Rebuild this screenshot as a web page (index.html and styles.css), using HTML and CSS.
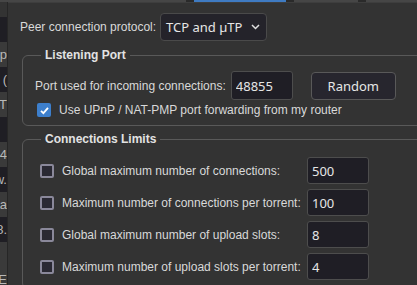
FILE: index.html
```html
<!DOCTYPE html>
<html>
<head>
<meta charset="utf-8">
<link rel="stylesheet" href="styles.css">
</head>
<body>
<div class="tabbar">
  <div class="seg s-a"></div>
  <div class="seg s-dark"></div>
  <div class="seg s-blue"></div>
  <div class="seg s-dark"></div>
  <div class="seg s-b"></div>
  <div class="seg s-dark"></div>
  <div class="seg s-c"></div>
</div>
<div class="main">
  <div class="list">
    <div class="lrow dark"><span></span></div>
    <div class="lrow light"><span>Op</span></div>
    <div class="lrow dark"><span>0 (</span></div>
    <div class="lrow light"><span>LT</span></div>
    <div class="lrow dark"><span></span></div>
    <div class="lrow light"><span>04</span></div>
    <div class="lrow dark"><span>w.</span></div>
    <div class="lrow light"><span>ta</span></div>
    <div class="lrow dark"><span>8.</span></div>
    <div class="lrow light"><span></span></div>
    <div class="lrow light"><span>E</span></div>
  </div>
  <div class="panel">
    <div class="proto-row">
      <label class="lbl">Peer connection protocol:</label>
      <div class="select">
        <span>TCP and µTP</span>
        <svg class="chev" width="9" height="6" viewBox="0 0 9 6"><path d="M1 1 L4.5 4.5 L8 1" fill="none" stroke="#e0e0e0" stroke-width="1.5"/></svg>
      </div>
    </div>
    <fieldset class="group g1">
      <legend>Listening Port</legend>
      <div class="port-row">
        <label class="lbl">Port used for incoming connections:</label>
        <input class="field port" type="text" value="48855">
        <button class="btn">Random</button>
      </div>
      <div class="check-row">
        <span class="cb checked"><svg width="11" height="11" viewBox="0 0 11 11"><path d="M2 5.8 L4.4 8.2 L9 2.8" fill="none" stroke="#fff" stroke-width="1.8"/></svg></span>
        <label class="lbl">Use UPnP / NAT-PMP port forwarding from my router</label>
      </div>
    </fieldset>
    <fieldset class="group g2">
      <legend>Connections Limits</legend>
      <div class="limits">
        <span class="cb"></span><label class="lbl">Global maximum number of connections:</label><input class="field num" type="text" value="500">
        <span class="cb"></span><label class="lbl">Maximum number of connections per torrent:</label><input class="field num" type="text" value="100">
        <span class="cb"></span><label class="lbl">Global maximum number of upload slots:</label><input class="field num" type="text" value="8">
        <span class="cb"></span><label class="lbl">Maximum number of upload slots per torrent:</label><input class="field num" type="text" value="4">
      </div>
    </fieldset>
  </div>
</div>
</body>
</html>
```
FILE: styles.css
```css
html, body {
  margin: 0;
  padding: 0;
}
body {
  width: 417px;
  height: 285px;
  overflow: hidden;
  background: #333333;
  font-family: "Liberation Sans", Arial, sans-serif;
  font-size: 12px;
  color: #d9d9d9;
}
.tabbar {
  display: flex;
  height: 2px;
  background: #464646;
}
.seg { flex: none; height: 2px; }
.s-a { width: 186px; background: #464646; }
.s-dark { width: 8px; background: #2a2a2a; }
.s-blue { width: 92px; background: #3f7bc2; }
.s-b { width: 64px; background: #464646; }
.s-c { flex: 1; background: #464646; }

.main {
  display: flex;
  height: 283px;
}
.list {
  flex: none;
  width: 7px;
  background: #333333;
  border-right: 1px solid #262626;
  padding-top: 15px;
  display: flex;
  flex-direction: column;
}
.lrow {
  flex: none;
  height: 25px;
  overflow: hidden;
  display: flex;
  justify-content: flex-end;
  align-items: center;
  white-space: nowrap;
  font-size: 13px;
  color: #b8b8b8;
}
.lrow.dark { background: #1f1e24; }
.lrow.light { background: #3a3a3a; }

.panel {
  flex: 1;
  min-width: 0;
  border-top: 1px solid #3e3e3e;
  padding-left: 12px;
  background: #333333;
}
.lbl {
  white-space: nowrap;
  color: #d9d9d9;
}
.proto-row {
  display: flex;
  align-items: center;
  gap: 4px;
  margin-top: 10px;
  height: 28px;
}
.select {
  box-sizing: border-box;
  width: 107px;
  height: 28px;
  border: 1px solid #4a4a4a;
  border-radius: 4px;
  background: #24232a;
  font-family: "Noto Sans", sans-serif;
  font-size: 13px;
  color: #e6e6e6;
  padding: 0 6px 0 5px;
  display: flex;
  align-items: center;
  justify-content: space-between;
}
.chev { display: block; }

.group {
  margin: 7px 0 0 2px;
  width: 440px;
  min-width: 0;
  border: 1px solid #595959;
  border-radius: 6px;
  padding: 0 0 0 12px;
}
.group legend {
  margin-left: 6px;
  padding: 0 4px;
  font-weight: bold;
  font-size: 12px;
  color: #e2e2e2;
}
.port-row {
  display: flex;
  align-items: center;
  margin-top: 9px;
}
.field {
  box-sizing: border-box;
  width: 62px;
  height: 28px;
  margin: 0;
  border: 1px solid #4d4d4d;
  border-radius: 3px;
  background: #1f1e25;
  color: #e6e6e6;
  font-family: "Noto Sans", sans-serif;
  font-size: 13px;
  padding: 0 4px;
  outline: none;
}
.port { margin-left: 5px; height: 29px; }
.btn {
  box-sizing: border-box;
  margin: 0 0 0 18px;
  width: 85px;
  height: 28px;
  border: 1px solid #595959;
  border-radius: 4px;
  background: #27262e;
  color: #e6e6e6;
  font-family: "Noto Sans", sans-serif;
  font-size: 13px;
  padding: 0;
}
.check-row {
  display: flex;
  align-items: center;
  margin: 3px 0 8px 2px;
  height: 14px;
}
.check-row .lbl { margin-left: 8px; }
.cb {
  box-sizing: border-box;
  flex: none;
  width: 14px;
  height: 14px;
  border: 2px solid #8a889a;
  border-radius: 2px;
  background: #2a2933;
  display: flex;
  align-items: center;
  justify-content: center;
}
.cb.checked {
  border: none;
  background: #3d7fcc;
}
.cb svg { display: block; }
.g2 { margin-top: 6px; }
.limits {
  display: grid;
  grid-template-columns: 14px 253px 62px;
  grid-auto-rows: 27px;
  row-gap: 5px;
  align-items: center;
  margin: 11px 0 8px 5px;
}
.limits .lbl { padding-left: 8px; }
.limits .num { height: 27px; }
```
